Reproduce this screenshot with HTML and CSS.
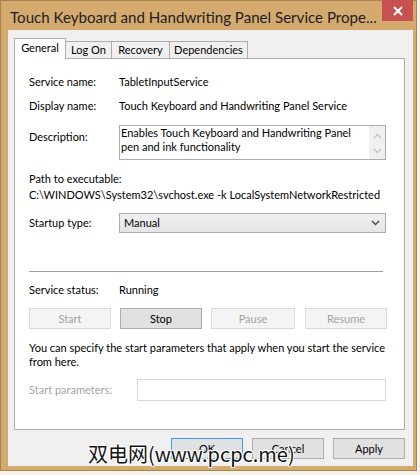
FILE: index.html
```html
<!DOCTYPE html>
<html>
<head>
<meta charset="utf-8">
<link rel="stylesheet" href="styles.css">
</head>
<body>
<div class="window">
  <div class="titlebar">
    <span class="title">Touch Keyboard and Handwriting Panel Service Prope...</span>
    <div class="close">
      <svg width="10" height="10" viewBox="0 0 10 10"><path d="M1 1 L9 9 M9 1 L1 9" stroke="#fff" stroke-width="2" fill="none"/></svg>
    </div>
  </div>
  <div class="client">
    <div class="tabs">
      <div class="tab active">General</div>
      <div class="tab">Log On</div>
      <div class="tab">Recovery</div>
      <div class="tab">Dependencies</div>
    </div>
    <div class="panel">
      <div class="row r-name"><span class="label">Service name:</span><span class="value">TabletInputService</span></div>
      <div class="row r-display"><span class="label">Display name:</span><span class="value">Touch Keyboard and Handwriting Panel Service</span></div>
      <div class="row r-desc">
        <span class="label desc-label">Description:</span>
        <div class="descbox">
          <div class="desctext">Enables Touch Keyboard and Handwriting Panel<br>pen and ink functionality</div>
          <div class="vscroll">
            <svg width="9" height="6" viewBox="0 0 9 6"><path d="M1 5 L4.5 1.5 L8 5" stroke="#c4c4c4" stroke-width="1.4" fill="none"/></svg>
            <svg width="9" height="6" viewBox="0 0 9 6"><path d="M1 1 L4.5 4.5 L8 1" stroke="#c4c4c4" stroke-width="1.4" fill="none"/></svg>
          </div>
        </div>
      </div>
      <div class="pathblock">
        <div>Path to executable:</div>
        <div class="nowrap">C:\WINDOWS\System32\svchost.exe -k LocalSystemNetworkRestricted</div>
      </div>
      <div class="row r-startup">
        <span class="label">Startup type:</span>
        <div class="combo">
          <span>Manual</span>
          <svg width="9" height="6" viewBox="0 0 9 6"><path d="M1 1 L4.5 4.5 L8 1" stroke="#505050" stroke-width="1.5" fill="none"/></svg>
        </div>
      </div>
      <div class="separator"></div>
      <div class="row r-status"><span class="label">Service status:</span><span class="value">Running</span></div>
      <div class="svcbuttons">
        <div class="btn disabled">Start</div>
        <div class="btn">Stop</div>
        <div class="btn disabled">Pause</div>
        <div class="btn disabled">Resume</div>
      </div>
      <div class="note">You can specify the start parameters that apply when you start the service<br>from here.</div>
      <div class="row r-params">
        <span class="label params-label">Start parameters:</span>
        <div class="paraminput"></div>
      </div>
    </div>
    <div class="footer">
      <div class="btn fbtn default">OK</div>
      <div class="btn fbtn">Cancel</div>
      <div class="btn fbtn">Apply</div>
    </div>
  </div>
</div>
<div class="watermark">双电网(www.pcpc.me)</div>
</body>
</html>
```
FILE: styles.css
```css
* { box-sizing: border-box; }
html, body { margin: 0; padding: 0; }
body {
  width: 420px;
  height: 475px;
  background: #f7f3ec;
  font-family: "Lato", "Liberation Sans", sans-serif;
  font-size: 11px;
  color: #000;
  position: relative;
  overflow: hidden;
}
.nowrap { white-space: nowrap; }
.window {
  width: 417px;
  height: 471px;
  background: #d4aa6f;
  border: 1px solid #a7834f;
  display: flex;
  flex-direction: column;
}
.titlebar {
  height: 29px;
  display: flex;
  align-items: flex-start;
}
.title {
  font-size: 15.1px;
  color: #1e1e1e;
  padding-left: 9px;
  padding-top: 6px;
  line-height: 20px;
  flex: 1;
  white-space: nowrap;
  overflow: hidden;
}
.close {
  width: 31px;
  height: 21px;
  margin-top: -1px;
  margin-right: 3px;
  background: #c75050;
  display: flex;
  align-items: center;
  justify-content: center;
}
.client {
  margin-left: 7px;
  width: 405px;
  height: 436px;
  background: #f0f0f0;
  padding: 8px 8px 0 6px;
}
.tabs {
  display: flex;
  align-items: flex-end;
  height: 20px;
}
.tab {
  height: 17px;
  line-height: 15px;
  border: 1px solid #acacac;
  border-bottom: none;
  background: #f0f0f0;
  padding: 0;
  margin-left: -1px;
  text-align: center;
  white-space: nowrap;
}
.tab:nth-child(2) { width: 47px; }
.tab:nth-child(3) { width: 59px; }
.tab:nth-child(4) { width: 79px; }
.tab.active {
  width: 52px;
  height: 21px;
  line-height: 17px;
  margin-left: 0;
  margin-bottom: -1px;
  background: #fff;
  position: relative;
  z-index: 1;
}
.panel {
  height: 372px;
  background: #fff;
  border: 1px solid #acacac;
  padding: 0 0 0 14px;
}
.row {
  display: flex;
  align-items: center;
  line-height: 14px;
}
.label { width: 90px; flex: none; }
.r-name { margin-top: 16px; height: 14px; }
.r-display { margin-top: 10px; height: 14px; }
.r-desc { margin-top: 12px; align-items: flex-start; }
.desc-label { padding-top: 5px; }
.descbox {
  width: 267px;
  height: 35px;
  border: 1px solid #acacac;
  display: flex;
}
.desctext {
  flex: 1;
  padding: 0 0 0 1px;
  line-height: 14px;
  white-space: nowrap;
}
.vscroll {
  width: 16px;
  background: #f0f0f0;
  display: flex;
  flex-direction: column;
  align-items: center;
  justify-content: space-around;
  padding: 3px 0 1px;
}
.pathblock {
  margin-top: 11px;
  line-height: 16px;
}
.r-startup { margin-top: 10px; }
.combo {
  width: 267px;
  height: 20px;
  border: 1px solid #acacac;
  background: linear-gradient(#f0f0f0, #e5e5e5);
  display: flex;
  align-items: center;
  justify-content: space-between;
  padding: 0 5px 0 4px;
}
.separator {
  margin-top: 38px;
  width: 354px;
  height: 1px;
  background: #a0a0a0;
}
.r-status { margin-top: 11px; height: 14px; }
.svcbuttons {
  margin-top: 11px;
  display: flex;
  gap: 9px;
}
.btn {
  width: 82px;
  height: 21px;
  border: 1px solid #adadad;
  background: #e1e1e1;
  display: flex;
  align-items: center;
  justify-content: center;
  color: #000;
}
.btn.disabled {
  background: #f4f4f4;
  border-color: #dadada;
  color: #a3a3a3;
}
.svcbuttons .btn:nth-child(3) { width: 84px; }
.svcbuttons .btn:nth-child(4) { margin-left: 1px; }
.note {
  margin-top: 12px;
  line-height: 14px;
  white-space: nowrap;
}
.r-params { margin-top: 10px; }
.params-label { width: 108px; color: #a3a3a3; }
.paraminput {
  width: 249px;
  height: 22px;
  border: 1px solid #d9d9d9;
  background: #fff;
}
.footer {
  margin-top: 8px;
  display: flex;
  justify-content: flex-end;
  gap: 9px;
}
.fbtn { width: 72px; }
.fbtn.default { border-color: #3c9cf0; }
.watermark {
  position: absolute;
  left: 88px;
  top: 439px;
  font-family: "Noto Sans CJK SC", sans-serif;
  font-size: 20px;
  font-weight: 400;
  line-height: 30px;
  color: #111;
  white-space: nowrap;
  text-shadow: -1px -1px 0 #fff, 1px -1px 0 #fff, -1px 1px 0 #fff, 1px 1px 0 #fff, 0 0 2px #fff;
}
```
